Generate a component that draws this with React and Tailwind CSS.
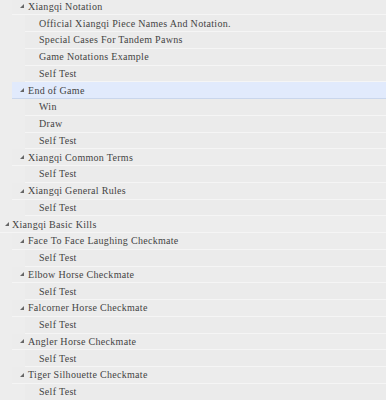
const tree = [
  {
    level: 1,
    title: "Xiangqi Notation",
    children: [
      "Official Xiangqi Piece Names And Notation.",
      "Special Cases For Tandem Pawns",
      "Game Notations Example",
      "Self Test",
    ],
  },
  { level: 1, title: "End of Game", selected: true, children: ["Win", "Draw", "Self Test"] },
  { level: 1, title: "Xiangqi Common Terms", children: ["Self Test"] },
  { level: 1, title: "Xiangqi General Rules", children: ["Self Test"] },
  { level: 0, title: "Xiangqi Basic Kills", children: [] },
  { level: 1, title: "Face To Face Laughing Checkmate", children: ["Self Test"] },
  { level: 1, title: "Elbow Horse Checkmate", children: ["Self Test"] },
  { level: 1, title: "Falcorner Horse Checkmate", children: ["Self Test"] },
  { level: 1, title: "Angler Horse Checkmate", children: ["Self Test"] },
  { level: 1, title: "Tiger Silhouette Checkmate", children: ["Self Test"] },
];

function Arrow() {
  return (
    <svg width="4" height="4" viewBox="0 0 4 4" className="shrink-0">
      <path d="M4 0 L4 4 L0 4 Z" fill="#666" />
    </svg>
  );
}

function Row({ children, selected, className = "" }) {
  return (
    <div
      className={
        "flex items-center h-[16.75px] border-b " +
        (selected ? "bg-[#e1eafc] border-[#c9d6ec]" : "border-[#f5f5f5]") +
        " " +
        className
      }
    >
      {children}
    </div>
  );
}

export default function App() {
  return (
    <div
      className="w-[386px] h-[400px] overflow-hidden bg-[#ededed] text-[10px] text-[#444] tracking-[0.3px]"
      style={{ fontFamily: '"Liberation Serif", "Noto Sans CJK SC", serif' }}
    >
      <div className="-mt-[1.4px]">
        {tree.map((node, i) => (
          <div key={i}>
            {node.level === 0 ? (
              <Row className="pl-[5px]">
                <Arrow />
                <span className="ml-[3px]">{node.title}</span>
              </Row>
            ) : (
              <div className="ml-[12px] bg-[#ececec]">
                <Row selected={node.selected} className="pl-[8px]">
                  <Arrow />
                  <span className="ml-[4px]">{node.title}</span>
                </Row>
              </div>
            )}
            {node.children.map((c, j) => (
              <div key={j} className="ml-[25px] bg-[#ebebeb]">
                <Row className="pl-[14px]">
                  <span>{c}</span>
                </Row>
              </div>
            ))}
          </div>
        ))}
      </div>
    </div>
  );
}
